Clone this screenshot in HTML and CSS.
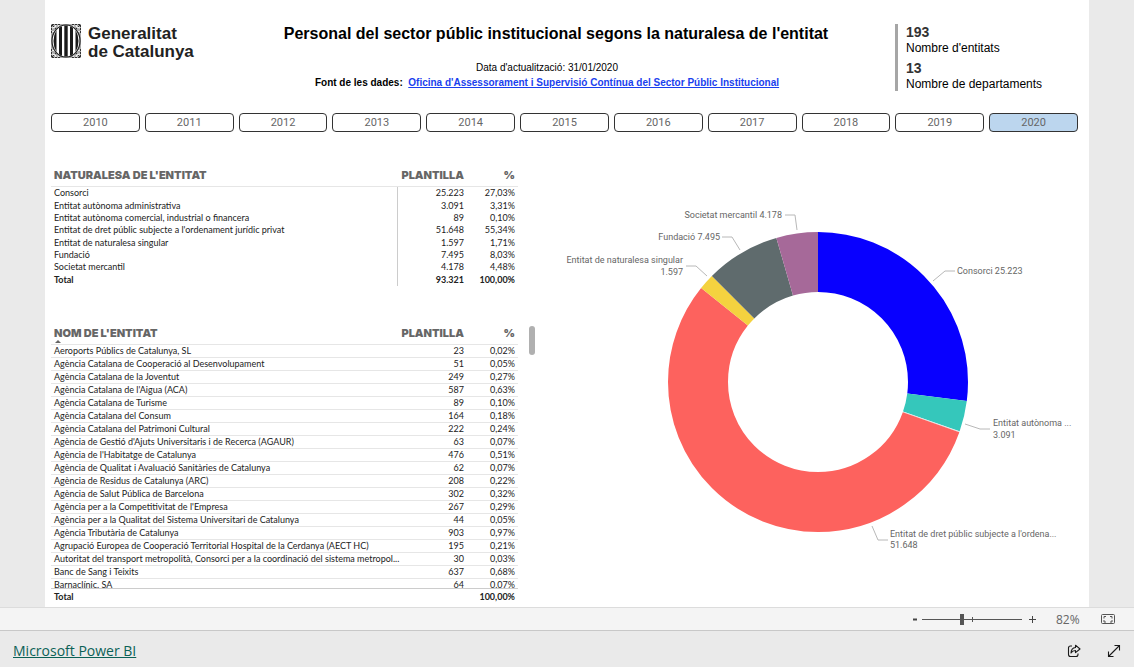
FILE: index.html
```html
<!DOCTYPE html>
<html lang="ca">
<head>
<meta charset="utf-8">
<meta name="viewport" content="width=device-width, initial-scale=1">
<title>Personal del sector públic institucional</title>
<link rel="stylesheet" href="styles.css">
</head>
<body>
<main class="stage">
  <div class="report">
    <header class="head">
      <div class="brand">
        <svg class="brand-mark" viewBox="0 0 30 34" aria-hidden="true">
          <path fill="#aaa" d="M0 0h30v34H0z"/>
          <g fill="none" stroke="#333">
            <path d="M.5 9V.5H9M21 .5h8.500V9M.5 25v8.500H9M21 33.500h8.500V25" stroke-dasharray="2 1"/>
            <path d="M1 1l6 6M29 1l-6 6M1 33l6-6M29 33l-6-6"/>
          </g>
          <g fill="none" stroke="#fff">
            <path d="M1 4q4 0 4-3M29 4q-4 0-4-3M1 30q4 0 4 3M29 30q-4 0-4 3M1 8q5-1 7-7M29 8q-5-1-7-7M1 26q5 1 7 7M29 26q-5 1-7 7"/>
          </g>
          <ellipse cx="15" cy="17" rx="14" ry="16" fill="#fff" stroke="#222" stroke-width="1.200"/>
          <g fill="#1a1a1a">
            <path d="M5.500 6v22Q2.500 23 2.500 17T5.500 6z"/>
            <path d="M8 3.800l3-1.600v29.600l-3-1.600z"/>
            <path d="M13.300 1.500h3.400v31h-3.400z"/>
            <path d="M19 2.200l3 1.600v26.400l-3 1.600z"/>
            <path d="M24.500 6v22q3-5 3-11T24.500 6z"/>
          </g>
        </svg>
        <p class="brand-name">Generalitat<br>de Catalunya</p>
      </div>
      <div class="titles">
        <h1>Personal del sector públic institucional segons la naturalesa de l'entitat</h1>
        <p class="updated">Data d'actualització: 31/01/2020</p>
        <p class="source">Font de les dades:&nbsp; <a href="#">Oficina d'Assessorament i Supervisió Contínua del Sector Públic Institucional</a></p>
      </div>
      <dl class="kpis">
        <dt>193</dt><dd>Nombre d'entitats</dd>
        <dt>13</dt><dd>Nombre de departaments</dd>
      </dl>
    </header>

    <nav class="years" aria-label="Any">
      <button type="button">2010</button><button type="button">2011</button><button type="button">2012</button><button type="button">2013</button><button type="button">2014</button><button type="button">2015</button><button type="button">2016</button><button type="button">2017</button><button type="button">2018</button><button type="button">2019</button><button type="button" class="selected" aria-pressed="true">2020</button>
    </nav>

    <div class="content">
      <div class="tables">
        <table class="data nature">
          <thead><tr><th>NATURALESA DE L'ENTITAT</th><th>PLANTILLA</th><th>%</th></tr></thead>
          <tbody>
            <tr><td>Consorci</td><td>25.223</td><td>27,03%</td></tr>
            <tr><td>Entitat autònoma administrativa</td><td>3.091</td><td>3,31%</td></tr>
            <tr><td>Entitat autònoma comercial, industrial o financera</td><td>89</td><td>0,10%</td></tr>
            <tr><td>Entitat de dret públic subjecte a l'ordenament jurídic privat</td><td>51.648</td><td>55,34%</td></tr>
            <tr><td>Entitat de naturalesa singular</td><td>1.597</td><td>1,71%</td></tr>
            <tr><td>Fundació</td><td>7.495</td><td>8,03%</td></tr>
            <tr><td>Societat mercantil</td><td>4.178</td><td>4,48%</td></tr>
            <tr class="total"><td>Total</td><td>93.321</td><td>100,00%</td></tr>
          </tbody>
        </table>

        <div class="entity-box">
          <div class="entity-view">
            <table class="data entities">
              <thead><tr><th aria-sort="ascending">NOM DE L'ENTITAT<span class="sort"></span></th><th>PLANTILLA</th><th>%</th></tr></thead>
              <tbody>
                <tr><td>Aeroports Públics de Catalunya, SL</td><td>23</td><td>0,02%</td></tr>
                <tr><td>Agència Catalana de Cooperació al Desenvolupament</td><td>51</td><td>0,05%</td></tr>
                <tr><td>Agència Catalana de la Joventut</td><td>249</td><td>0,27%</td></tr>
                <tr><td>Agència Catalana de l'Aigua (ACA)</td><td>587</td><td>0,63%</td></tr>
                <tr><td>Agència Catalana de Turisme</td><td>89</td><td>0,10%</td></tr>
                <tr><td>Agència Catalana del Consum</td><td>164</td><td>0,18%</td></tr>
                <tr><td>Agència Catalana del Patrimoni Cultural</td><td>222</td><td>0,24%</td></tr>
                <tr><td>Agència de Gestió d'Ajuts Universitaris i de Recerca (AGAUR)</td><td>63</td><td>0,07%</td></tr>
                <tr><td>Agència de l'Habitatge de Catalunya</td><td>476</td><td>0,51%</td></tr>
                <tr><td>Agència de Qualitat i Avaluació Sanitàries de Catalunya</td><td>62</td><td>0,07%</td></tr>
                <tr><td>Agència de Residus de Catalunya (ARC)</td><td>208</td><td>0,22%</td></tr>
                <tr><td>Agència de Salut Pública de Barcelona</td><td>302</td><td>0,32%</td></tr>
                <tr><td>Agència per a la Competitivitat de l'Empresa</td><td>267</td><td>0,29%</td></tr>
                <tr><td>Agència per a la Qualitat del Sistema Universitari de Catalunya</td><td>44</td><td>0,05%</td></tr>
                <tr><td>Agència Tributària de Catalunya</td><td>903</td><td>0,97%</td></tr>
                <tr><td>Agrupació Europea de Cooperació Territorial Hospital de la Cerdanya (AECT HC)</td><td>195</td><td>0,21%</td></tr>
                <tr><td>Autoritat del transport metropolità, Consorci per a la coordinació del sistema metropol...</td><td>30</td><td>0,03%</td></tr>
                <tr><td>Banc de Sang i Teixits</td><td>637</td><td>0,68%</td></tr>
                <tr><td>Barnaclínic, SA</td><td>64</td><td>0,07%</td></tr>
              </tbody>
              <tfoot><tr class="total"><td>Total</td><td></td><td>100,00%</td></tr></tfoot>
            </table>
          </div>
          <div class="scroll-thumb"></div>
        </div>
      </div>

      <svg class="donut" viewBox="0 0 538 360" role="img" aria-label="Plantilla per naturalesa de l'entitat">
        <g fill="none" stroke-width="60" transform="rotate(-90 267 182)">
          <circle cx="267" cy="182" r="120" pathLength="100" stroke="#0800ff" stroke-dasharray="27.030 72.970"/>
          <circle cx="267" cy="182" r="120" pathLength="100" stroke="#35c7bb" stroke-dasharray="3.310 96.690" stroke-dashoffset="-27.030"/>
          <circle cx="267" cy="182" r="120" pathLength="100" stroke="#dfe3e3" stroke-dasharray=".1 99.900" stroke-dashoffset="-30.340"/>
          <circle cx="267" cy="182" r="120" pathLength="100" stroke="#fd625e" stroke-dasharray="55.340 44.660" stroke-dashoffset="-30.440"/>
          <circle cx="267" cy="182" r="120" pathLength="100" stroke="#f4d23f" stroke-dasharray="1.710 98.290" stroke-dashoffset="-85.780"/>
          <circle cx="267" cy="182" r="120" pathLength="100" stroke="#5f6b6d" stroke-dasharray="8.030 91.970" stroke-dashoffset="-87.490"/>
          <circle cx="267" cy="182" r="120" pathLength="100" stroke="#a66999" stroke-dasharray="4.480 95.520" stroke-dashoffset="-95.520"/>
        </g>
        <g class="leaders">
          <path d="M382 81l12-10h10M414 224l15 5h10M321 326l6 14h10M156 76l-11-10h-10M189 50l-8-13h-10M246 30l-2-15h-10"/>
        </g>
        <g class="labels">
          <text x="406" y="74">Consorci 25.223</text>
          <text x="442" y="226">Entitat autònoma ...<tspan x="442" dy="12">3.091</tspan></text>
          <text x="339" y="337">Entitat de dret públic subjecte a l'ordena...<tspan x="339" dy="11">51.648</tspan></text>
          <g text-anchor="end">
            <text x="132" y="63">Entitat de naturalesa singular<tspan x="132" dy="12">1.597</tspan></text>
            <text x="169" y="40">Fundació 7.495</text>
            <text x="231" y="18">Societat mercantil 4.178</text>
          </g>
        </g>
      </svg>
    </div>
  </div>
</main>

<div class="zoombar">
  <button type="button" class="step" aria-label="Redueix"><svg width="5" height="9"><path d="M0 4.500h4" stroke="#444" stroke-width="2"/></svg></button>
  <input class="zoom" type="range" min="0" max="100" value="40" aria-label="Zoom">
  <button type="button" class="step" aria-label="Amplia"><svg width="9" height="9"><path d="M1 4.500h7M4.500 1v7" stroke="#444"/></svg></button>
  <output class="level">82%</output>
  <button type="button" class="step" aria-label="Ajusta a la pàgina"><svg width="15" height="11" fill="none" stroke="#555"><rect x=".5" y=".5" width="13" height="9" rx="1"/><path d="M3 4.500v-2h2M9 2.500h2v2M3 6v2h2M9 8h2V6"/></svg></button>
</div>

<footer class="footer">
  <a href="#">Microsoft Power BI</a>
  <div class="actions">
    <button type="button" aria-label="Comparteix"><svg width="14" height="14" viewBox="0 0 14 14" fill="none" stroke="#1a1a1a" stroke-width="1.100"><path d="M5 2H3.500Q1.500 2 1.500 4v6.500q0 2 2 2H9q2 0 2-2V9.500"/><path d="M8.500 1.200L13 5 8.500 8.700V6.500Q5.500 6.500 4 9q.2-5 4.500-5.500z" stroke-linejoin="round"/></svg></button>
    <button type="button" aria-label="Pantalla completa"><svg width="14" height="14" viewBox="0 0 14 14" fill="none" stroke="#1a1a1a" stroke-width="1.100"><path d="M1.500 12.500l11-11M7.500 1.500h5v5M6.500 12.500h-5v-5"/></svg></button>
  </div>
</footer>
</body>
</html>
```
FILE: styles.css
```css
* { box-sizing: border-box; }
body {
  margin: 0;
  min-height: 100vh;
  display: flex;
  flex-direction: column;
  background: #eaeaea;
  color: #000;
  font-family: "Liberation Sans", Arial, sans-serif;
}
h1, p, dl, dd { margin: 0; }
button { padding: 0; border: 0; background: none; font: inherit; color: inherit; }
svg { display: block; }

.stage { flex: 1; display: flex; padding: 0 45px; }
.report { flex: 1; min-width: 0; padding: 24px 11px 2px 6px; background: #fff; }

.head { display: grid; grid-template-columns: 194px 1fr 183px; }
.brand { display: flex; align-items: flex-start; gap: 7px; }
.brand-mark { width: 30px; height: 34px; }
.brand-name { font-size: 17px; line-height: 18px; font-weight: 700; color: #222; white-space: nowrap; padding-top: 1px; }
.titles { text-align: center; padding-right: 46px; }
.titles h1 { margin-right: -18px; font-size: 16px; line-height: 19px; font-weight: 700; white-space: nowrap; }
.updated { margin-top: 17px; font-size: 10px; line-height: 15px; }
.source { font-size: 10px; line-height: 15px; font-weight: 700; white-space: nowrap; }
.source a { color: #1a3fee; }
.kpis { border-left: 3px solid #a6a6a6; padding-left: 8px; }
.kpis dt { font-size: 14px; line-height: 17px; font-weight: 700; color: #333; }
.kpis dd { font-size: 12px; line-height: 14px; }
.kpis dd + dt { margin-top: 5px; }

.years { display: grid; grid-template-columns: repeat(11, 1fr); gap: 5px; margin-top: 22px; }
.years button {
  height: 19px;
  border: 1px solid #333;
  border-radius: 4px;
  background: #fff;
  color: #666;
  font-family: Roboto, sans-serif;
  font-size: 11px;
  line-height: 17px;
}
.years .selected { background: #bcd6ee; }

.content { display: grid; grid-template-columns: 500px 1fr; margin-right: -11px; margin-top: 32px; }
.donut { width: 100%; margin-top: 36px; }
.leaders { fill: none; stroke: #b8b8b8; }
.labels { font-family: Roboto, sans-serif; font-size: 9px; fill: #666; }

.data { width: 467px; border-collapse: separate; border-spacing: 0; table-layout: fixed; font-family: Lato, sans-serif; font-size: 9px; line-height: 12px; color: #222; }
.data th, .data td { padding: 0 3px; text-align: right; white-space: nowrap; font-weight: 400; }
.data th:nth-child(1), .data td:nth-child(1) { text-align: left; }
.data th:nth-child(1) { width: 347px; }
.data th:nth-child(2) { width: 69px; }
.data th { height: 23px; padding-bottom: 1px; color: #666; font-family: Inter, sans-serif; font-size: 11px; font-weight: 900; border-bottom: 1px solid #e6e6e6; }
.data .total td { font-weight: 700; color: #222; }

.nature { height: 122px; }
.nature td:nth-child(1) { border-right: 1px solid #ccc; }

.entity-box { display: flex; gap: 11px; margin-top: 36px; }
.entity-view { height: 282px; overflow: hidden; }
.entities thead th { position: sticky; top: 0; background: #fff; }
.entities tbody td { height: 13px; border-bottom: 1px solid #e6e6e6; }
.entities tfoot td { position: sticky; bottom: 0; height: 16px; background: #fff; border-top: 1px solid #ccc; }
.sort { position: absolute; left: 4px; bottom: 1px; border: 3px solid transparent; border-top: 0; border-bottom-color: #666; }
.scroll-thumb { width: 6px; height: 29px; margin-top: 4px; border-radius: 3px; background: #b0b0b0; }

.zoombar { display: flex; align-items: center; justify-content: flex-end; height: 23px; padding-right: 18px; border-top: 1px solid #dcdcdc; background: #f4f4f4; }
.zoom { appearance: none; width: 100px; height: 11px; margin: 0 6px 0 4px; background: linear-gradient(#555, #555) 50px 50% / 1px 5px no-repeat, linear-gradient(#555, #555) 0 50% / 100% 1px no-repeat; }
.zoom::-webkit-slider-thumb { appearance: none; width: 4px; height: 11px; background: #555; }
.level { width: 42px; padding-left: 19px; margin-right: 22px; font-family: "Open Sans", sans-serif; font-size: 12px; color: #666; }

.footer { display: flex; align-items: center; justify-content: space-between; height: 37px; padding: 3px 13px 0; border-top: 1px solid #c8c8c8; }
.footer a { color: #0b6156; font-family: "Open Sans", sans-serif; font-size: 14px; }
.actions { display: flex; gap: 26px; }
```
